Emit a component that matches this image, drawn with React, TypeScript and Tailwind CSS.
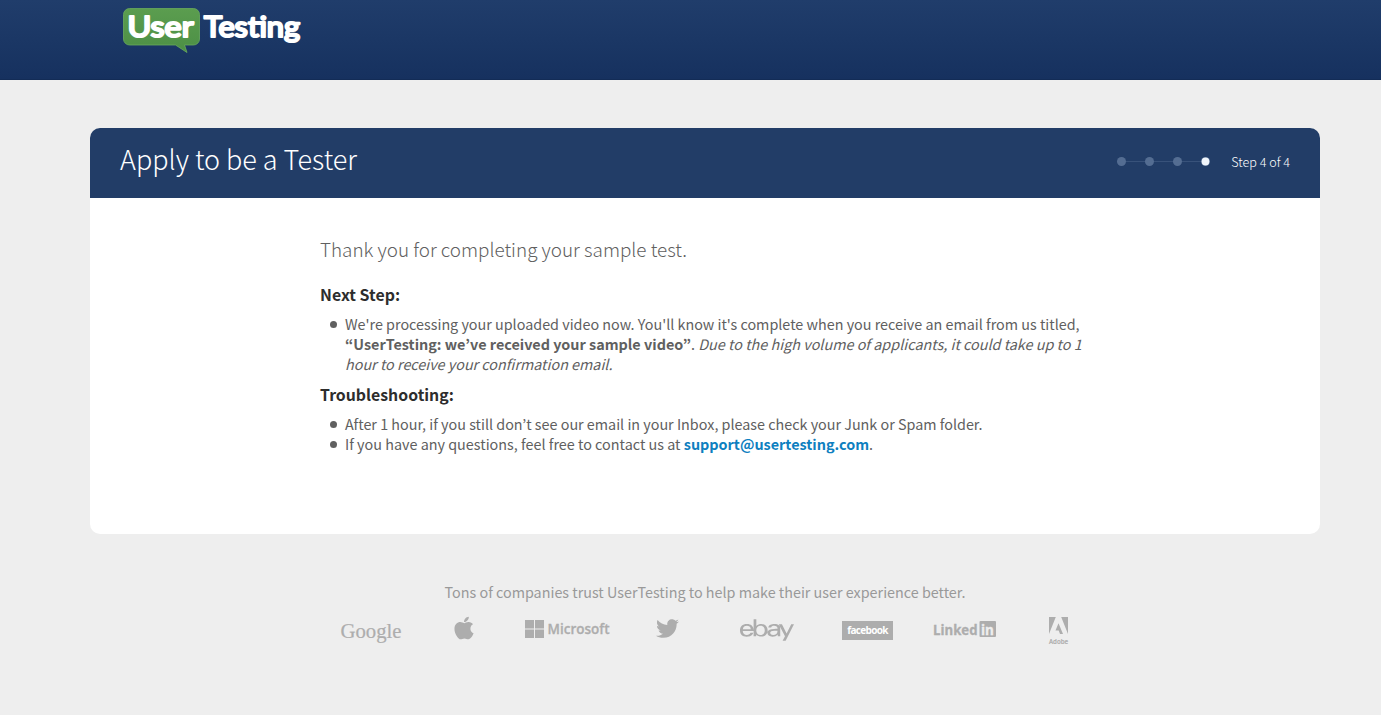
import type { ReactNode } from "react";
import { FaApple, FaTwitter } from "react-icons/fa";
import { SiEbay } from "react-icons/si";

function UserTestingLogo() {
  return (
    <svg width="182" height="48" viewBox="0 0 182 48" role="img" aria-label="UserTesting">
      <defs>
        <linearGradient id="bubble" x1="0" y1="0" x2="0" y2="1">
          <stop offset="0" stopColor="#5b9d4f" />
          <stop offset="1" stopColor="#4c8f45" />
        </linearGradient>
      </defs>
      <path
        d="M7.500 2.500H71.500a6 6 0 0 1 6 6V33a6 6 0 0 1-6 6H62.500L65 46.500L53.500 39H7.500a6 6 0 0 1-6-6V8.500a6 6 0 0 1 6-6Z"
        fill="url(#bubble)"
        stroke="#6aab5c"
        strokeWidth="0.8"
      />
      <g
        fill="#fff"
        stroke="#fff"
        strokeWidth="2.2"
        strokeLinejoin="round"
        fontFamily="Lato, sans-serif"
        fontWeight="400"
        fontSize="28"
      >
        <text x="5.500" y="30.800" textLength="66" lengthAdjust="spacingAndGlyphs">User</text>
        <text x="82" y="30.800" textLength="96" lengthAdjust="spacingAndGlyphs">Testing</text>
      </g>
    </svg>
  );
}

function Steps() {
  return (
    <svg width="94" height="12" viewBox="0 0 94 12" aria-hidden="true">
      <path d="M5 5.500H89" stroke="#38527a" strokeWidth="1" />
      <circle cx="5.500" cy="5.500" r="4.500" fill="#546d92" />
      <circle cx="33.500" cy="5.500" r="4.500" fill="#546d92" />
      <circle cx="61.500" cy="5.500" r="4.500" fill="#546d92" />
      <circle cx="89.500" cy="5.500" r="4.500" fill="#546d92" />
      <circle cx="89.500" cy="5.500" r="3.900" fill="#f0f5fb" />
    </svg>
  );
}

function Item({ children }: { children: ReactNode }) {
  return (
    <li className="flex">
      <span className="mt-[7px] mr-2 ml-[10px] size-[7px] shrink-0 rounded-full bg-[#606060]" />
      <div>{children}</div>
    </li>
  );
}

function Companies() {
  return (
    <div className="mt-[14px] ml-[340px] flex h-8 items-start text-[#adadad]">
      <svg width="64" height="32" className="shrink-0" fill="currentColor">
        <text x="0.500" y="22" fontSize="21.500" fontFamily="'Liberation Serif', serif" stroke="currentColor" strokeWidth="0.2" textLength="61" lengthAdjust="spacingAndGlyphs">Google</text>
      </svg>
      <FaApple className="-mt-px ml-[47px] size-[26px] shrink-0" />
      <svg width="90" height="32" className="ml-[48px] shrink-0" fill="currentColor">
        <path d="M0 4h9v8.500H0zM10 4h9v8.500h-9zM0 13.500h9V22H0zM10 13.500h9V22h-9z" />
        <text x="22.500" y="17.500" fontSize="14.500" fontWeight="600" fontFamily="'Open Sans', sans-serif" stroke="currentColor" strokeWidth="0.3" textLength="62" lengthAdjust="spacingAndGlyphs">Microsoft</text>
      </svg>
      <FaTwitter className="mt-px ml-[41px] size-[23px] shrink-0" />
      <SiEbay className="-mt-[13px] ml-[61px] size-[54px] shrink-0" />
      <div className="mt-[5px] ml-[48px] h-[19px] w-[51px] shrink-0 bg-[#adadad] text-center font-['Open_Sans',sans-serif] text-[10px] leading-[18px] font-bold tracking-[-0.7px] text-white">
        facebook
      </div>
      <svg width="64" height="32" className="ml-[40px] shrink-0">
        <rect x="46.500" y="5" width="16.500" height="16" rx="1" fill="#adadad" />
        <g fontSize="14" fontWeight="700" fontFamily="'Open Sans', sans-serif" strokeWidth="0.3">
          <text x="0" y="18.500" fill="#adadad" stroke="#adadad" textLength="44.500" lengthAdjust="spacingAndGlyphs">Linked</text>
          <text x="48" y="18.500" fill="#eee" stroke="#eee" textLength="13" lengthAdjust="spacingAndGlyphs">in</text>
        </g>
      </svg>
      <svg width="28" height="34" className="ml-[51px] shrink-0" fill="#adadad">
        <path d="M1 1H7.800L1 18ZM13.200 1H20V18ZM10.500 7.200L15 18H12L10.700 14.500H7.500Z" />
        <text x="1" y="27.500" fontSize="7.500" fontWeight="600" fontFamily="'Open Sans', sans-serif" stroke="#adadad" strokeWidth="0.2" textLength="19" lengthAdjust="spacingAndGlyphs">Adobe</text>
      </svg>
    </div>
  );
}

export default function App() {
  return (
    <div className="min-h-screen w-full bg-[#eee] font-['Noto_Sans_CJK_KR','Noto_Sans',sans-serif] text-[14.35px] leading-5 text-[#606060]">
      <header className="h-20 border-b border-[#132c56] bg-linear-to-b from-[#203d6b] to-[#16315f] pt-[6px] pl-[122px]">
        <UserTestingLogo />
      </header>

      <main className="mt-12 ml-[90px] h-[406px] w-[1230px] overflow-hidden rounded-[10px] bg-white">
        <div className="flex h-[70px] items-center bg-[#223d67] pr-[30px] pl-[30px] text-white">
          <h1 className="-mt-[9px] text-[27px] leading-[40px] font-light whitespace-nowrap">Apply to be a Tester</h1>
          <div className="-mt-[2px] ml-auto flex items-center gap-[21px]">
            <Steps />
            <span className="text-[12.6px] font-light whitespace-nowrap">Step 4 of 4</span>
          </div>
        </div>
        <section className="pt-[36px] pl-[230px] whitespace-nowrap">
          <h2 className="text-[18.87px] leading-[30px] font-light">Thank you for completing your sample test.</h2>
          <h3 className="mt-[21px] text-[15.9px] leading-5 font-bold text-[#2d2d2d]">Next Step:</h3>
          <ul className="mt-[9px]">
            <Item>
              We're processing your uploaded video now. You'll know it's complete when you receive an email from us titled,
              <br />
              <b className="text-[14.4px]">“UserTesting: we’ve received your sample video”</b>. <i className="text-[14.38px]">Due to the high volume of applicants, it could take up to 1</i>
              <br />
              <i>hour to receive your confirmation email.</i>
            </Item>
          </ul>
          <h3 className="mt-[11px] text-[15.85px] leading-5 font-bold text-[#2d2d2d]">Troubleshooting:</h3>
          <ul className="mt-[9px]">
            <Item>After 1 hour, if you still don’t see our email in your Inbox, please check your Junk or Spam folder.</Item>
            <Item>
              <span className="text-[14.38px]">If you have any questions, feel free to contact us at </span>
              <a href="mailto:support@usertesting.com" className="text-[14.4px] font-bold text-[#0e7fc0]">support@usertesting.com</a>.
            </Item>
          </ul>
        </section>
      </main>

      <footer>
        <p className="mt-12 ml-[90px] w-[1230px] text-center text-[#999]">
          Tons of companies trust UserTesting to help make their user experience better.
        </p>
        <Companies />
      </footer>
    </div>
  );
}
